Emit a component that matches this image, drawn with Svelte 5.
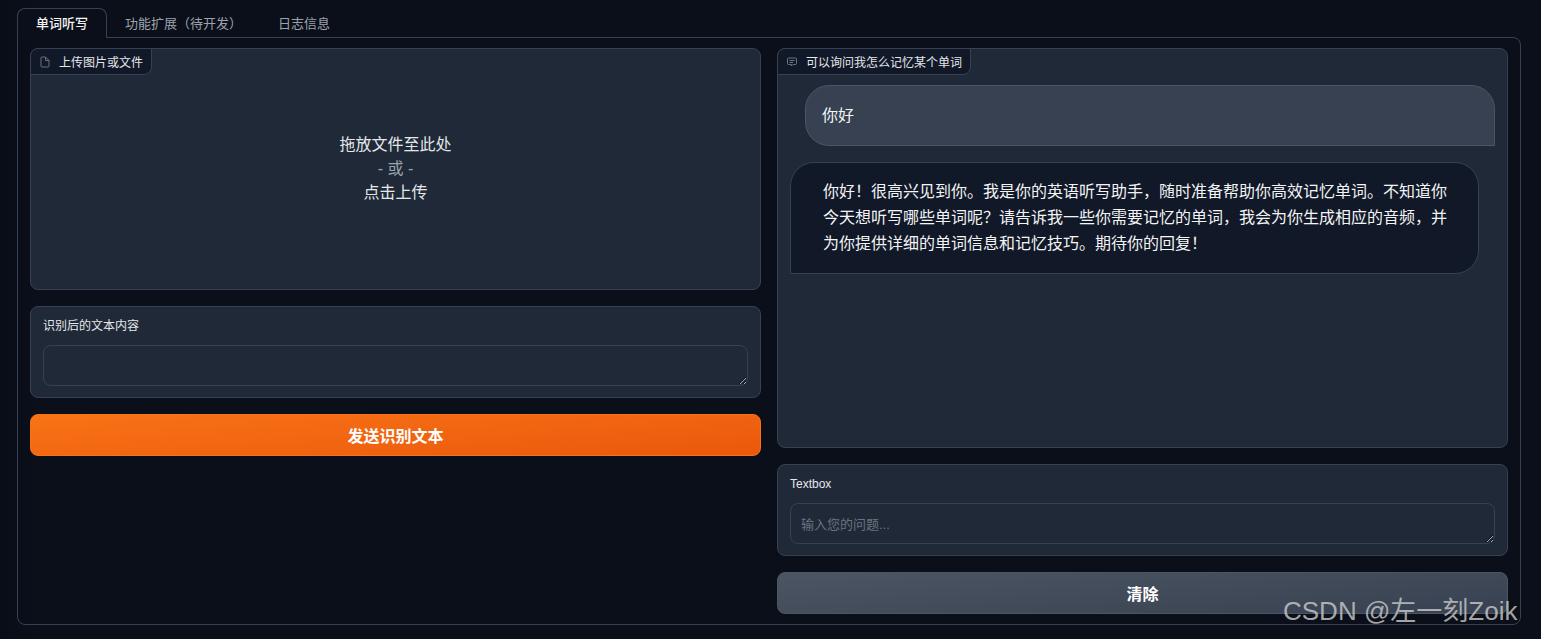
<script>
  let question = $state('');
  let recognized = $state('');

  const tabs = ['单词听写', '功能扩展（待开发）', '日志信息'];
</script>

<div class="page">
  <div class="tab-nav">
    {#each tabs as tab, i}
      <button class="tab" class:selected={i === 0}>{tab}</button>
    {/each}
  </div>

  <div class="panel">
    <div class="col">
      <div class="block upload">
        <div class="label-tag">
          <svg viewBox="0 0 24 24" width="12" height="12" fill="none" stroke="currentColor" stroke-width="2">
            <path d="M13 2H6a2 2 0 0 0-2 2v16a2 2 0 0 0 2 2h12a2 2 0 0 0 2-2V9z" />
            <path d="M13 2v7h7" />
          </svg>
          <span>上传图片或文件</span>
        </div>
        <div class="drop">
          <div>拖放文件至此处</div>
          <div class="or">- 或 -</div>
          <div>点击上传</div>
        </div>
      </div>

      <div class="block field">
        <div class="field-label">识别后的文本内容</div>
        <textarea bind:value={recognized}></textarea>
      </div>

      <button class="btn primary">发送识别文本</button>
    </div>

    <div class="col">
      <div class="block chat">
        <div class="label-tag">
          <svg viewBox="0 0 24 24" width="12" height="12" fill="none" stroke="currentColor" stroke-width="2">
            <path d="M3 6a2 2 0 0 1 2-2h14a2 2 0 0 1 2 2v9a2 2 0 0 1-2 2h-5l-3 3v-3H5a2 2 0 0 1-2-2z" />
            <path d="M7 9h10M7 13h7" />
          </svg>
          <span>可以询问我怎么记忆某个单词</span>
        </div>
        <div class="messages">
          <div class="msg user">你好</div>
          <div class="msg bot">你好！很高兴见到你。我是你的英语听写助手，随时准备帮助你高效记忆单词。不知道你今天想听写哪些单词呢？请告诉我一些你需要记忆的单词，我会为你生成相应的音频，并为你提供详细的单词信息和记忆技巧。期待你的回复！</div>
        </div>
      </div>

      <div class="block field">
        <div class="field-label">Textbox</div>
        <textarea placeholder="输入您的问题..." bind:value={question}></textarea>
      </div>

      <button class="btn secondary">清除</button>
    </div>
  </div>

  <div class="watermark">CSDN @左一刻Zoik</div>
</div>

<style>
  :global(body) {
    margin: 0;
    background: #0b0f19;
  }
  .page {
    position: relative;
    box-sizing: border-box;
    height: 639px;
    padding: 8px 20px 14px 17px;
    overflow: hidden;
    font-family: "Liberation Sans", "Noto Sans CJK SC", sans-serif;
    color: #f3f4f6;
    background: linear-gradient(90deg, #090d17 0, #0b0f19 40px);
  }
  .tab-nav {
    display: flex;
    height: 30px;
    position: relative;
    z-index: 1;
  }
  .tab {
    box-sizing: border-box;
    height: 30px;
    padding: 0 17px;
    margin-right: 0;
    background: none;
    border: 1px solid transparent;
    border-bottom: none;
    border-radius: 8px 8px 0 0;
    color: #9ca3af;
    font: 13px "Liberation Sans", "Noto Sans CJK SC", sans-serif;
    line-height: 28px;
  }
  .tab.selected {
    width: 90px;
    padding: 0;
    height: 30px;
    color: #f3f4f6;
    background: #0b0f19;
    border-color: #374151;
    margin-right: 0;
    font-weight: 500;
  }
  .panel {
    box-sizing: border-box;
    height: 588px;
    margin-top: -1px;
    padding: 10px 12px;
    display: grid;
    grid-template-columns: 731px 731px;
    column-gap: 16px;
    border: 1px solid #374151;
    border-radius: 0 8px 8px 8px;
  }
  .col {
    display: flex;
    flex-direction: column;
    gap: 16px;
  }
  .block {
    box-sizing: border-box;
    position: relative;
    background: #1f2937;
    border: 1px solid #374151;
    border-radius: 8px;
  }
  .label-tag {
    position: absolute;
    top: -1px;
    left: -1px;
    z-index: 2;
    box-sizing: border-box;
    height: 27px;
    display: flex;
    align-items: center;
    gap: 8px;
    padding: 0 8px;
    background: #111827;
    border: 1px solid #374151;
    border-radius: 8px 0 8px 0;
    font-size: 12px;
    color: #e5e7eb;
  }
  .label-tag svg {
    color: #6b7280;
  }
  .upload {
    height: 242px;
  }
  .drop {
    height: 100%;
    display: flex;
    flex-direction: column;
    align-items: center;
    justify-content: center;
    font-size: 16px;
    line-height: 24px;
    padding-bottom: 0;
    box-sizing: border-box;
    color: #e5e7eb;
  }
  .or {
    color: #9ca3af;
  }
  .field {
    height: 92px;
    padding: 11px 12px;
    display: flex;
    flex-direction: column;
  }
  .field-label {
    font-size: 12px;
    line-height: 16px;
    color: #e5e7eb;
    margin-bottom: 11px;
  }
  textarea {
    box-sizing: border-box;
    display: block;
    width: 100%;
    height: 42px;
    padding: 10px;
    background: #1f2937;
    border: 1px solid #374151;
    border-radius: 8px;
    color: #e5e7eb;
    font: 13px "Liberation Sans", "Noto Sans CJK SC", sans-serif;
    outline: none;
  }
  textarea::placeholder {
    color: #6b7280;
  }
  .btn {
    height: 42px;
    border-radius: 8px;
    border: none;
    color: #fff;
    font: 600 16px "Liberation Sans", "Noto Sans CJK SC", sans-serif;
  }
  .primary {
    background: linear-gradient(175deg, #f97316, #ea580c);
    border: 1px solid #f97316;
  }
  .secondary {
    background: linear-gradient(175deg, #4b5563, #374151);
    border: 1px solid #4b5563;
  }
  .chat {
    height: 400px;
  }
  .messages {
    display: flex;
    flex-direction: column;
    gap: 16px;
    padding: 36px 12px 0;
  }
  .msg {
    box-sizing: border-box;
    font-size: 16px;
    line-height: 26px;
    color: #f3f4f6;
    border: 1px solid #4b5563;
  }
  .user {
    align-self: flex-end;
    width: 690px;
    height: 61px;
    padding: 17px 16px;
    background: #374151;
    border-radius: 24px 24px 0 24px;
  }
  .bot {
    align-self: flex-start;
    width: 689px;
    height: 112px;
    padding: 16px 30px 16px 32px;
    background: #111827;
    border-color: #374151;
    border-radius: 24px 24px 24px 0;
  }
  .watermark {
    position: absolute;
    top: 593px;
    left: 1283px;
    font-size: 26px;
    line-height: 36px;
    white-space: nowrap;
    color: rgba(200, 200, 200, 0.82);
  }
</style>
